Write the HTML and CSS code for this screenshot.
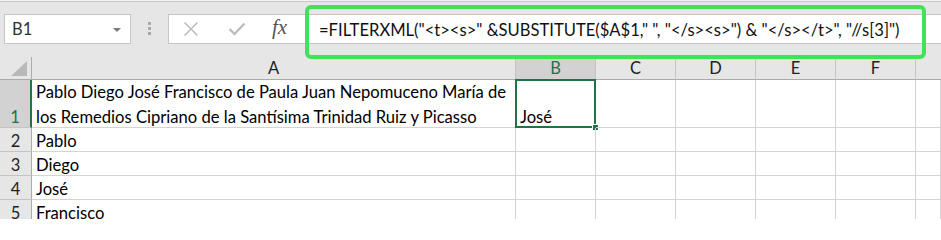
FILE: index.html
```html
<!DOCTYPE html>
<html lang="es">
<head>
<meta charset="utf-8">
<title>FILTERXML</title>
<link rel="stylesheet" href="styles.css">
</head>
<body>
<div class="app">
  <div class="toolbar">
    <div class="namebox"><span class="name">B1</span><span class="caret"></span></div>
    <div class="grip"><i></i><i></i><i></i></div>
    <div class="fbar">
      <div class="fbtns">
        <svg class="ico-x" width="16" height="16" viewBox="0 0 16 16"><path d="M1.5 1.5 L14.5 14.5 M14.5 1.5 L1.5 14.5" stroke="#bdbdbd" stroke-width="1.6" fill="none"/></svg>
        <svg class="ico-ok" width="18" height="14" viewBox="0 0 18 14"><path d="M1.5 7 L6.5 12 L16.5 1.5" stroke="#bdbdbd" stroke-width="2.4" fill="none"/></svg>
        <span class="fx">fx</span>
      </div>
      <div class="finput">=FILTERXML("&lt;t&gt;&lt;s&gt;" &amp;SUBSTITUTE($A$1," ", "&lt;/s&gt;&lt;s&gt;") &amp; "&lt;/s&gt;&lt;/t&gt;", "//s[3]")</div>
    </div>
    <div class="highlight"></div>
  </div>
  <div class="sheet">
    <div class="corner"><svg width="16" height="15" viewBox="0 0 16 15"><path d="M16 0 L16 15 L0 15 Z" fill="#b9b9b9"/></svg></div>
    <div class="ch">A</div>
    <div class="ch sel">B</div>
    <div class="ch">C</div>
    <div class="ch">D</div>
    <div class="ch">E</div>
    <div class="ch">F</div>
    <div class="ch last"></div>

    <div class="rh sel"><span>1</span></div>
    <div class="cell tall"><span>Pablo Diego José Francisco de Paula Juan Nepomuceno María de<br>los Remedios Cipriano de la Santísima Trinidad Ruiz y Picasso</span></div>
    <div class="cell tall active"><span>José</span></div>
    <div class="cell"></div><div class="cell"></div><div class="cell"></div><div class="cell"></div><div class="cell"></div>

    <div class="rh"><span>2</span></div>
    <div class="cell"><span>Pablo</span></div>
    <div class="cell"></div><div class="cell"></div><div class="cell"></div><div class="cell"></div><div class="cell"></div><div class="cell"></div>

    <div class="rh"><span>3</span></div>
    <div class="cell"><span>Diego</span></div>
    <div class="cell"></div><div class="cell"></div><div class="cell"></div><div class="cell"></div><div class="cell"></div><div class="cell"></div>

    <div class="rh"><span>4</span></div>
    <div class="cell"><span>José</span></div>
    <div class="cell"></div><div class="cell"></div><div class="cell"></div><div class="cell"></div><div class="cell"></div><div class="cell"></div>

    <div class="rh"><span>5</span></div>
    <div class="cell"><span>Francisco</span></div>
    <div class="cell"></div><div class="cell"></div><div class="cell"></div><div class="cell"></div><div class="cell"></div><div class="cell"></div>
  </div>
</div>
</body>
</html>
```

FILE: styles.css
```css
html {
  background: #fff;
}

html, body {
  margin: 0;
  padding: 0;
  width: 941px;
  height: 219px;
  overflow: hidden;
}

body {
  background: #f3f3f3;
}

.app {
  width: 941px;
  height: 219px;
  overflow: hidden;
  font-family: Lato, "Open Sans", sans-serif;
}

.toolbar {
  position: relative;
  box-sizing: border-box;
  height: 56px;
  margin-top: 1px;
  border-top: 1px solid #c9c9c9;
  background: #e6e6e6;
  display: flex;
  align-items: flex-start;
  padding-top: 12px;
}

.namebox {
  box-sizing: border-box;
  margin-left: 4px;
  width: 127px;
  height: 30px;
  background: #fff;
  border: 1px solid #c6c6c6;
  display: flex;
  align-items: center;
  justify-content: space-between;
  padding: 0 9px 0 7px;
}

.name {
  font-size: 16.5px;
  color: #333;
}

.caret {
  width: 0;
  height: 0;
  border-left: 4px solid transparent;
  border-right: 4px solid transparent;
  border-top: 4px solid #7a7a7a;
  margin-top: 1px;
}

.grip {
  margin-left: 17px;
  margin-top: 8px;
  display: flex;
  flex-direction: column;
  gap: 2px;
}

.grip i {
  display: block;
  width: 3px;
  height: 3px;
  background: #a9a9a9;
}

.fbar {
  margin-left: 17px;
  flex: 1;
  box-sizing: border-box;
  height: 30px;
  background: #fff;
  border: 1px solid #c6c6c6;
  border-right: none;
  display: flex;
  align-items: center;
}

.fbtns {
  width: 137px;
  height: 100%;
  display: flex;
  align-items: center;
  flex-shrink: 0;
}

.ico-x {
  margin-left: 14px;
}

.ico-ok {
  margin-left: 29px;
}

.fx {
  margin-left: 26px;
  font-family: "Liberation Serif", "DejaVu Serif", serif;
  font-style: italic;
  font-size: 21px;
  color: #555;
  line-height: 1;
  margin-top: -3px;
}

.finput {
  padding-left: 13px;
  font-size: 16.6px;
  color: #111;
  white-space: nowrap;
  line-height: 28px;
  margin-top: 1px;
}

.highlight {
  position: absolute;
  left: 305px;
  top: 3px;
  width: 621px;
  height: 54px;
  box-sizing: border-box;
  border: 4px solid #40e358;
  border-radius: 6px;
}

.sheet {
  display: grid;
  grid-template-columns: 32px 484px repeat(5, 80px) 1fr;
  grid-template-rows: 23px 48px repeat(4, 24px);
  background: #fff;
  font-size: 16.6px;
}

.corner, .ch, .rh, .cell {
  box-sizing: border-box;
}

.corner {
  background: #e6e6e6;
  border-right: 1px solid #ababab;
  border-bottom: 1px solid #ababab;
  display: flex;
  align-items: flex-end;
  justify-content: flex-end;
  padding: 0 4px 3px 0;
}

.ch {
  background: #e6e6e6;
  border-right: 1px solid #c4c4c4;
  border-bottom: 1px solid #ababab;
  display: flex;
  align-items: center;
  justify-content: center;
  font-size: 16.5px;
  color: #222;
}

.ch.last {
  border-right: none;
}

.ch.sel {
  background: #d2d2d2;
  color: #217346;
}

.rh {
  background: #e6e6e6;
  border-right: 1px solid #ababab;
  border-bottom: 1px solid #c4c4c4;
  display: flex;
  align-items: flex-end;
  justify-content: center;
  font-size: 16.5px;
  line-height: 24px;
  color: #222;
}

.rh span {
  margin-bottom: -2px;
}

.rh.sel {
  background: #d2d2d2;
  color: #217346;
  border-right: 2px solid #217346;
}

.cell {
  position: relative;
  border-right: 1px solid #d4d4d4;
  border-bottom: 1px solid #d4d4d4;
  display: flex;
  align-items: flex-end;
  padding: 0 4px 0 4px;
  line-height: 24px;
  color: #000;
  white-space: nowrap;
}

.cell span {
  margin-bottom: -2px;
}

.cell.tall {
  line-height: 25px;
}

.cell.tall span {
  margin-bottom: -3px;
}

.cell.active::before {
  content: "";
  position: absolute;
  left: -1px;
  top: -1px;
  right: -1px;
  bottom: -1px;
  border: 2px solid #217346;
}

.cell.active::after {
  content: "";
  position: absolute;
  right: -4px;
  bottom: -4px;
  width: 5px;
  height: 5px;
  background: #217346;
  border: 1px solid #fff;
}
```
